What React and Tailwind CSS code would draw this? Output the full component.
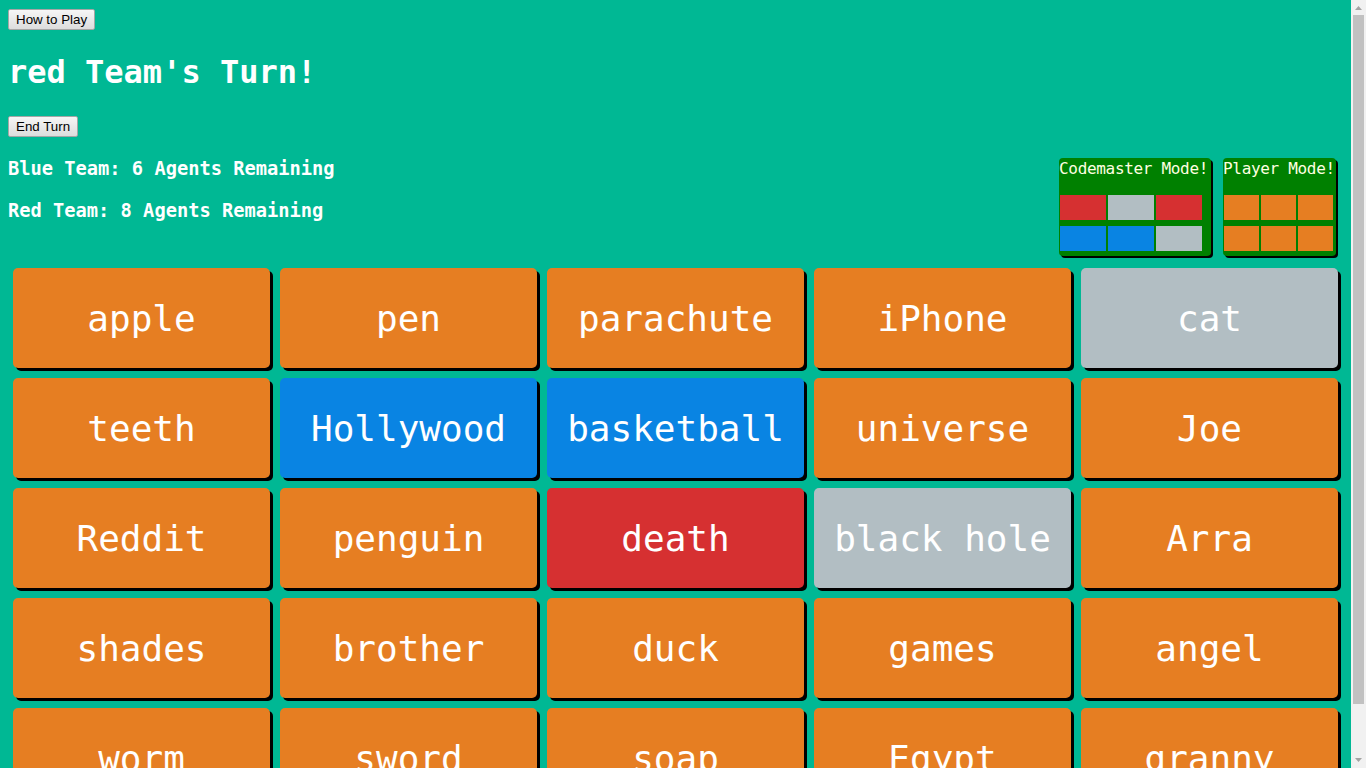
import React from "react";

const COLORS = {
  o: "bg-[#e67e22]",
  b: "bg-[#0984e3]",
  r: "bg-[#d63031]",
  g: "bg-[#b2bec3]",
};

const WORDS = [
  ["apple", "o"], ["pen", "o"], ["parachute", "o"], ["iPhone", "o"], ["cat", "g"],
  ["teeth", "o"], ["Hollywood", "b"], ["basketball", "b"], ["universe", "o"], ["Joe", "o"],
  ["Reddit", "o"], ["penguin", "o"], ["death", "r"], ["black hole", "g"], ["Arra", "o"],
  ["shades", "o"], ["brother", "o"], ["duck", "o"], ["games", "o"], ["angel", "o"],
  ["worm", "o"], ["sword", "o"], ["soap", "o"], ["Egypt", "o"], ["granny", "o"],
];

function Btn({ children }) {
  return (
    <button className="h-[21px] px-[7px] border border-[#a6a6a6] rounded-[2px] bg-gradient-to-b from-[#f6f6f6] to-[#dddddd] text-black text-[13.33px] leading-none font-['Liberation_Sans',Arial,sans-serif]">
      {children}
    </button>
  );
}

function ModeBox({ title, cells, cellW, boxW }) {
  return (
    <div className={`${boxW} bg-[#008000] rounded-[4px] shadow-[2px_2px_0_#000] pt-[1px] pb-[5px]`}>
      <div className="leading-5 text-[16px] text-[#ffffe0] whitespace-nowrap tracking-[-0.02em]">{title}</div>
      <div className="mt-[16px] pl-[1px] flex flex-col gap-[6px]">
        {cells.map((row, i) => (
          <div key={i} className="flex gap-[2px]">
            {row.map((c, j) => (
              <div key={j} className={`h-[25px] ${cellW} ${COLORS[c]}`} />
            ))}
          </div>
        ))}
      </div>
    </div>
  );
}

function Scrollbar() {
  return (
    <div className="sticky top-0 h-screen w-[15px] shrink-0 bg-[#f1f1f1] flex flex-col items-center">
      <svg width="15" height="15" viewBox="0 0 15 15" className="shrink-0">
        <path d="M4 10 L7.5 6 L11 10 Z" fill="#a3a3a3" />
      </svg>
      <div className="w-[11px] h-[689px] bg-[#c1c1c1]" />
      <div className="flex-1" />
      <svg width="15" height="15" viewBox="0 0 15 15" className="shrink-0">
        <path d="M4 5 L7.5 9 L11 5 Z" fill="#a3a3a3" />
      </svg>
    </div>
  );
}

export default function App() {
  return (
    <div className="flex min-h-screen bg-[#00b894]">
      <div className="flex-1 min-w-0 px-2 pt-[9px] font-['DejaVu_Sans_Mono','Liberation_Mono',monospace] text-white">
        <div className="flex">
          <Btn>How to Play</Btn>
        </div>
        <h1 className="mt-[22px] h-10 leading-10 text-[32px] font-bold">red Team's Turn!</h1>
        <div className="mt-[24px] flex">
          <Btn>End Turn</Btn>
        </div>
        <div className="mt-[20px] flex justify-between items-start">
          <div>
            <h3 className="leading-6 text-[18.72px] font-bold">Blue Team: 6 Agents Remaining</h3>
            <h3 className="mt-[18px] leading-6 text-[18.72px] font-bold">Red Team: 8 Agents Remaining</h3>
          </div>
          <div className="mt-[1px] flex gap-3 mr-[7px]">
            <ModeBox
              title="Codemaster Mode!"
              boxW="w-[152px]"
              cellW="w-[46px]"
              cells={[["r", "g", "r"], ["b", "b", "g"]]}
            />
            <ModeBox
              title="Player Mode!"
              boxW="w-[113px]"
              cellW="w-[35px]"
              cells={[["o", "o", "o"], ["o", "o", "o"]]}
            />
          </div>
        </div>
        <div className="mt-[7px] grid grid-cols-5">
          {WORDS.map(([w, c]) => (
            <div
              key={w}
              className={`m-[5px] h-[100px] rounded-[5px] shadow-[3px_3px_0_#000] ${COLORS[c]} flex items-center justify-center pt-[1px] text-[36px] whitespace-nowrap`}
            >
              {w}
            </div>
          ))}
        </div>
      </div>
      <Scrollbar />
    </div>
  );
}
